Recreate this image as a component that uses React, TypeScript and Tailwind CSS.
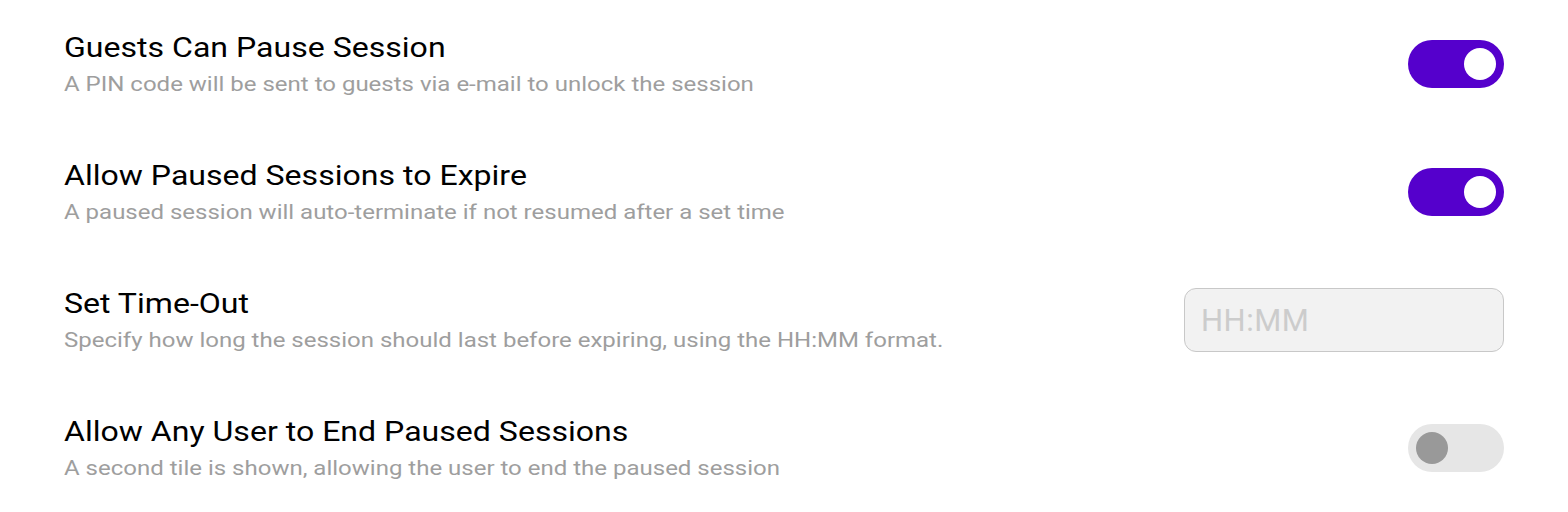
import { useState } from "react";

const rows = [
  {
    title: "Guests Can Pause Session",
    desc: "A PIN code will be sent to guests via e-mail to unlock the session",
    kind: "toggle",
    on: true,
  },
  {
    title: "Allow Paused Sessions to Expire",
    desc: "A paused session will auto-terminate if not resumed after a set time",
    kind: "toggle",
    on: true,
  },
  {
    title: "Set Time-Out",
    desc: "Specify how long the session should last before expiring, using the HH:MM format.",
    kind: "input",
    on: false,
  },
  {
    title: "Allow Any User to End Paused Sessions",
    desc: "A second tile is shown, allowing the user to end the paused session",
    kind: "toggle",
    on: false,
  },
];

function Toggle({ initial }: { initial: boolean }) {
  const [on, setOn] = useState(initial);
  return (
    <button
      onClick={() => setOn(!on)}
      className={
        on
          ? "flex h-12 w-24 items-center justify-end rounded-full bg-[#5500cc] px-2"
          : "flex h-12 w-24 items-center justify-start rounded-full bg-[#e6e6e6] px-2"
      }
    >
      <span
        className={
          on ? "h-8 w-8 rounded-full bg-white" : "h-8 w-8 rounded-full bg-[#999999]"
        }
      />
    </button>
  );
}

export default function App() {
  return (
    <div className="w-full bg-white px-16 font-['Roboto',sans-serif]">
      {rows.map((r) => (
        <div key={r.title} className="flex h-32 items-center justify-between">
          <div className="flex flex-col items-start">
            <p className="origin-left scale-x-[1.145] text-[28px] leading-10 text-black">{r.title}</p>
            <p className="origin-left scale-x-[1.2] text-[20px] leading-8 text-[#9e9e9e]">{r.desc}</p>
          </div>
          {r.kind === "toggle" ? (
            <Toggle initial={r.on} />
          ) : (
            <input
              placeholder="HH:MM"
              className="h-16 w-80 rounded-xl border border-[#c8c8c8] bg-[#f2f2f2] px-4 text-[31px] tracking-[0.5px] text-black outline-none placeholder:text-[#cccccc]"
            />
          )}
        </div>
      ))}
    </div>
  );
}
